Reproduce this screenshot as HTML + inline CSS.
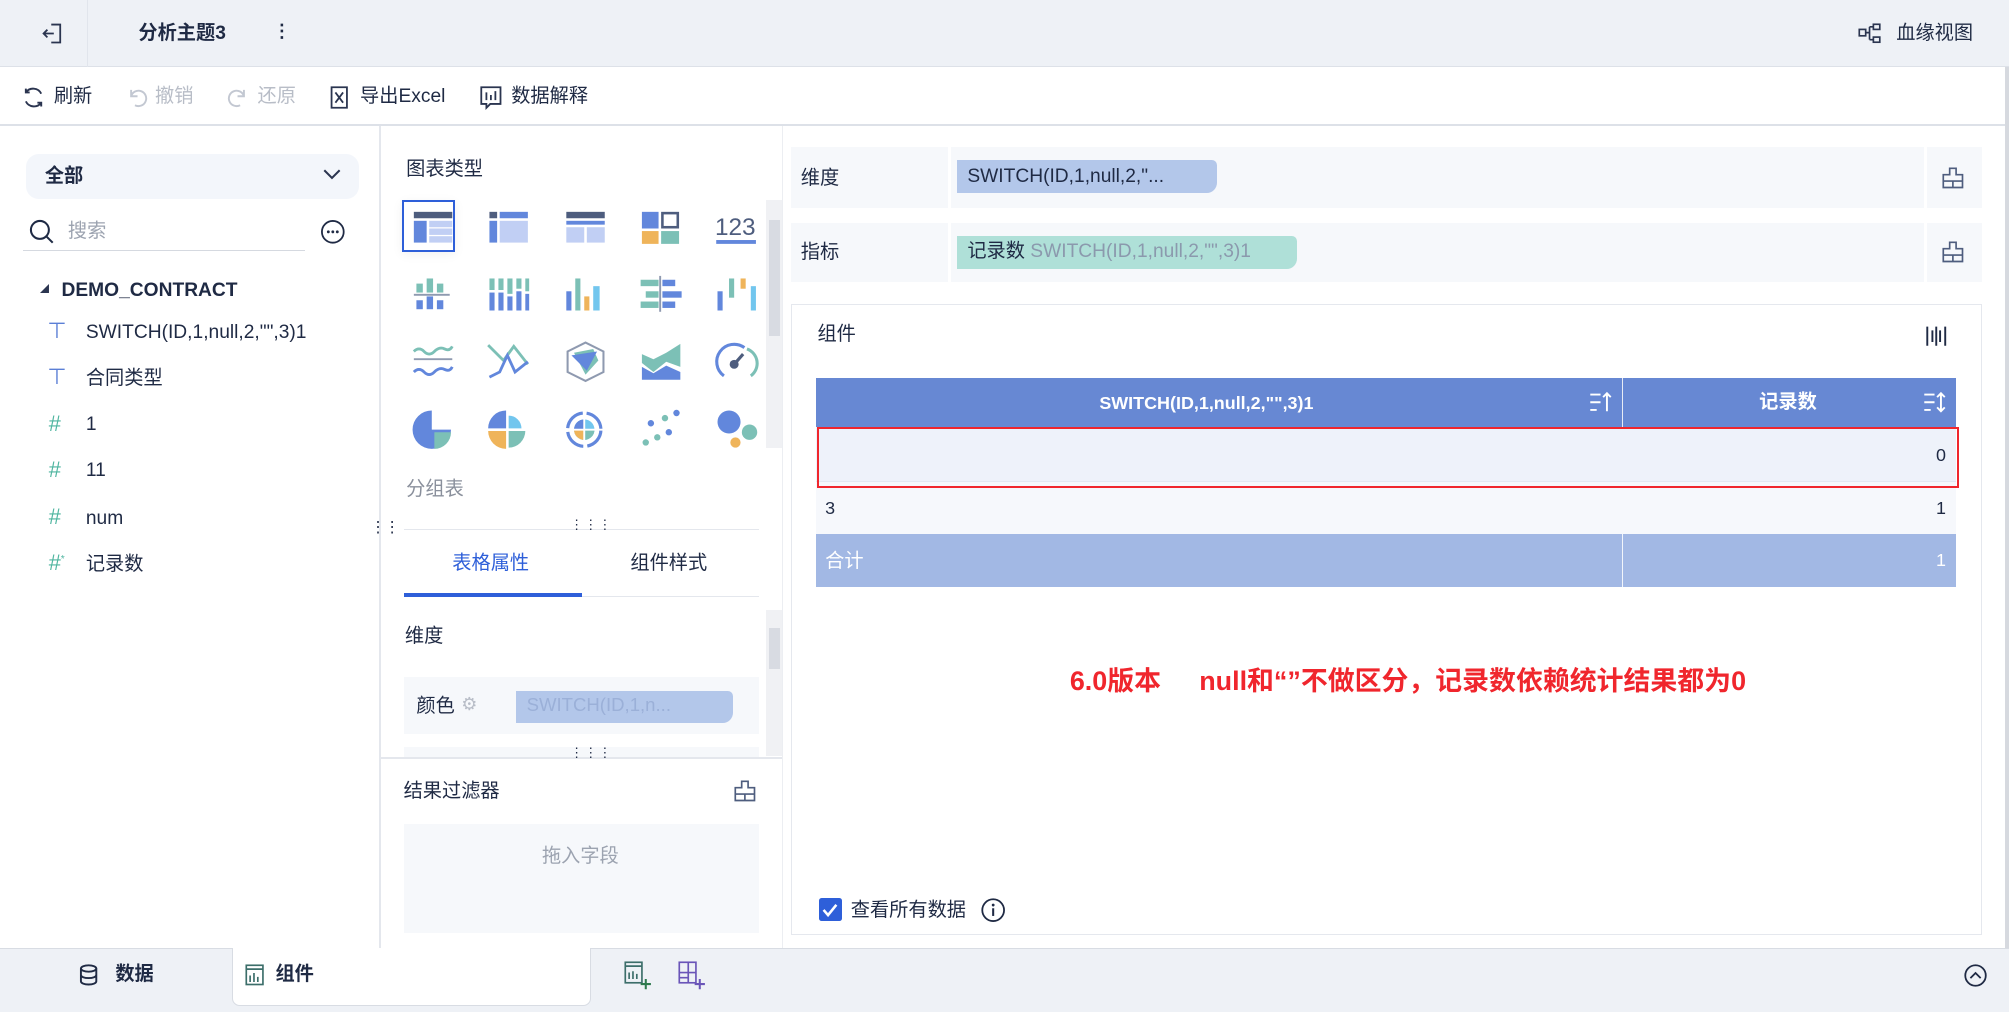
<!DOCTYPE html>
<html><head><meta charset="utf-8"><style>
*{box-sizing:border-box;margin:0;padding:0}
html,body{width:2009px;height:1012px;overflow:hidden;background:#fff}
#r{zoom:1.28125;width:1568px;height:790px;position:relative;font-family:"Liberation Sans","Noto Sans CJK SC",sans-serif;color:#1f2a44;font-size:15px}
.a{position:absolute}
.t{position:absolute;white-space:nowrap;line-height:1}
svg{position:absolute;overflow:visible}
</style></head><body><div id="r">
<div class="a" style="left:0;top:0;width:1568px;height:52px;background:#eef1f6;border-bottom:1px solid #dde1e8"></div>
<div class="a" style="left:68px;top:0;width:1px;height:52px;background:#e1e5ec"></div>
<svg style="left:32px;top:17px" width="18" height="18" viewBox="0 0 18 18" fill="none" stroke="#2b3550" stroke-width="1.4"><path d="M8 2h7v14H8M2 9h8M5 6l-3 3 3 3"/></svg>
<div class="t" style="left:108px;top:19px;font-weight:bold;font-size:15px">分析主题3</div>
<div class="t" style="left:213px;top:18px;font-size:14px;font-weight:bold">⋮</div>
<svg style="left:1450px;top:18px" width="18" height="16" viewBox="0 0 18 16" fill="none" stroke="#2b3550" stroke-width="1.3"><rect x="1" y="5" width="5" height="5"/><rect x="12" y="1" width="5" height="4"/><rect x="12" y="11" width="5" height="4"/><path d="M6 7.5h3M9 3v10M9 3h3M9 13h3"/></svg>
<div class="t" style="left:1480px;top:19px;font-size:15px">血缘视图</div>
<div class="a" style="left:0;top:97px;width:1568px;height:1px;background:#dde1e8"></div>
<svg style="left:17px;top:67px" width="18" height="18" viewBox="0 0 18 18" fill="none" stroke="#2b3550" stroke-width="1.5"><path d="M15 6A7 7 0 0 0 3 5M3 12a7 7 0 0 0 12 1M3 2v3h3M15 16v-3h-3"/></svg>
<div class="t" style="left:42px;top:68px">刷新</div>
<svg style="left:98px;top:67px" width="18" height="18" viewBox="0 0 18 18" fill="none" stroke="#c3c8d2" stroke-width="1.5"><path d="M4 3v5h5M4 8a6 6 0 1 1 3 7"/></svg>
<div class="t" style="left:121px;top:68px;color:#b8bdc7">撤销</div>
<svg style="left:176px;top:67px" width="18" height="18" viewBox="0 0 18 18" fill="none" stroke="#c3c8d2" stroke-width="1.5"><path d="M14 3v5H9M14 8a6 6 0 1 0-3 7"/></svg>
<div class="t" style="left:201px;top:68px;color:#b8bdc7">还原</div>
<svg style="left:257px;top:67px" width="16" height="18" viewBox="0 0 16 18" fill="none" stroke="#2b3550" stroke-width="1.4"><path d="M2 1h12v16H2zM5 5l6 8M11 5l-6 8"/></svg>
<div class="t" style="left:281px;top:68px">导出Excel</div>
<svg style="left:375px;top:67px" width="17" height="18" viewBox="0 0 17 18" fill="none" stroke="#2b3550" stroke-width="1.4"><path d="M1 1h15v13H8l-3 3v-3H1zM5 5v6M8.5 7v4M12 4v7"/></svg>
<div class="t" style="left:399px;top:68px">数据解释</div>
<div class="a" style="left:296px;top:98px;width:1px;height:642px;background:#e4e7ed"></div>
<div class="a" style="left:20px;top:120px;width:260px;height:35px;background:#f3f6fb;border-radius:10px"></div>
<div class="t" style="left:35px;top:130px;font-weight:bold">全部</div>
<svg style="left:252px;top:132px" width="14" height="9" viewBox="0 0 14 9" fill="none" stroke="#2b3550" stroke-width="1.6"><path d="M1 1l6 6 6-6"/></svg>
<svg style="left:23px;top:171px" width="20" height="20" viewBox="0 0 20 20" fill="none" stroke="#1f2a44" stroke-width="1.6"><circle cx="8.5" cy="8.5" r="7"/><path d="M13.5 13.5l5 5"/></svg>
<div class="t" style="left:53px;top:173px;color:#9ca3b0">搜索</div>
<div class="a" style="left:18px;top:195px;width:220px;height:1px;background:#d5d9e0"></div>
<svg style="left:250px;top:171px" width="20" height="20" viewBox="0 0 20 20"><circle cx="10" cy="10" r="8.5" fill="none" stroke="#1f2a44" stroke-width="1.4"/><circle cx="6.5" cy="10" r="1.1" fill="#1f2a44"/><circle cx="10" cy="10" r="1.1" fill="#1f2a44"/><circle cx="13.5" cy="10" r="1.1" fill="#1f2a44"/></svg>
<svg style="left:31px;top:222px" width="8" height="8"><path d="M7 0v7H0z" fill="#2b3550"/></svg>
<div class="t" style="left:48px;top:219px;font-weight:bold;font-size:15px">DEMO_CONTRACT</div>
<div class="t" style="left:37px;top:250px;color:#5b7fd6;font-size:17px">⊤</div>
<div class="t" style="left:67px;top:252px">SWITCH(ID,1,null,2,"",3)1</div>
<div class="t" style="left:37px;top:286px;color:#5b7fd6;font-size:17px">⊤</div>
<div class="t" style="left:67px;top:288px">合同类型</div>
<div class="t" style="left:38px;top:322px;color:#4fb5a0;font-size:17px">#</div><div class="t" style="left:67px;top:324px">1</div>
<div class="t" style="left:38px;top:358px;color:#4fb5a0;font-size:17px">#</div><div class="t" style="left:67px;top:360px">11</div>
<div class="t" style="left:38px;top:395px;color:#4fb5a0;font-size:17px">#</div><div class="t" style="left:67px;top:397px">num</div>
<div class="t" style="left:38px;top:431px;color:#4fb5a0;font-size:17px">#<sup style="font-size:8px">*</sup></div><div class="t" style="left:67px;top:433px">记录数</div>
<div class="t" style="left:289px;top:409px;font-size:12px;line-height:6px;letter-spacing:-1px">⋮⋮</div>
<div class="t" style="left:317px;top:125px">图表类型</div>
<div class="a" style="left:314px;top:156px;width:41px;height:41px;border:2px solid #2e5fd9;box-shadow:0 2px 8px rgba(0,0,0,.06)"></div>
<svg style="left:320px;top:162px" width="280" height="190" viewBox="0 0 280 190">
<g><rect x="3" y="3" width="30" height="5" fill="#4e5d7e"/><rect x="3" y="10" width="10" height="17" fill="#6287dc"/><rect x="15" y="10" width="18" height="5" fill="#c1cff4"/><rect x="15" y="16" width="18" height="5" fill="#c1cff4"/><rect x="15" y="22" width="18" height="5" fill="#c1cff4"/></g>
<g transform="translate(59,0)"><rect x="3" y="3" width="6" height="5" fill="#4e5d7e"/><rect x="11" y="3" width="22" height="5" fill="#6287dc"/><rect x="3" y="10" width="6" height="17" fill="#6287dc"/><rect x="11" y="10" width="22" height="17" fill="#c1cff4"/></g>
<g transform="translate(119,0)"><rect x="3" y="3" width="30" height="5" fill="#4e5d7e"/><rect x="3" y="10" width="30" height="3" fill="#6287dc"/><rect x="3" y="15" width="14" height="12" fill="#c1cff4"/><rect x="19" y="15" width="14" height="12" fill="#c1cff4"/></g>
<g transform="translate(178,0)"><rect x="3" y="3" width="13" height="13" fill="#6287dc"/><rect x="19" y="4" width="12" height="11" fill="none" stroke="#4e5d7e" stroke-width="2"/><rect x="3" y="18" width="13" height="10" fill="#efb45a"/><rect x="18" y="18" width="14" height="10" fill="#7cc0b6"/></g>
<g transform="translate(237,0)"><text x="1" y="21" font-family="Liberation Sans" font-size="19" fill="#4e5d7e">123</text><rect x="2" y="25" width="31" height="3" fill="#6287dc"/></g>
<g transform="translate(0,52)"><rect x="5" y="7" width="5" height="7" fill="#7cc0b6"/><rect x="13" y="3" width="5" height="11" fill="#7cc0b6"/><rect x="21" y="7" width="5" height="7" fill="#7cc0b6"/><rect x="3" y="15" width="28" height="1.5" fill="#8f9ab0"/><rect x="5" y="20" width="5" height="7" fill="#6287dc"/><rect x="13" y="17" width="5" height="10" fill="#6287dc"/><rect x="21" y="20" width="5" height="7" fill="#6287dc"/></g>
<g transform="translate(59,52)" fill="#6287dc"><rect x="3" y="14" width="4" height="14"/><rect x="10" y="14" width="4" height="14"/><rect x="17" y="17" width="4" height="11"/><rect x="24" y="13" width="4" height="15"/><rect x="31" y="15" width="3" height="13"/><g fill="#7cc0b6"><rect x="3" y="3" width="4" height="9"/><rect x="10" y="3" width="4" height="9"/><rect x="17" y="3" width="4" height="12"/><rect x="24" y="3" width="4" height="8"/><rect x="31" y="3" width="3" height="10"/></g></g>
<g transform="translate(119,52)"><rect x="3" y="13" width="4" height="15" fill="#6287dc"/><rect x="10" y="3" width="4" height="25" fill="#7cc0b6"/><rect x="17" y="17" width="4" height="11" fill="#efb45a"/><rect x="24" y="9" width="5" height="19" fill="#72c6ee"/></g>
<g transform="translate(178,52)"><rect x="2" y="4" width="14" height="5" fill="#7cc0b6"/><rect x="6" y="13" width="10" height="5" fill="#7cc0b6"/><rect x="2" y="21" width="14" height="5" fill="#7cc0b6"/><rect x="16.5" y="1" width="1.5" height="28" fill="#8f9ab0"/><rect x="19" y="4" width="10" height="5" fill="#6287dc"/><rect x="19" y="13" width="15" height="5" fill="#6287dc"/><rect x="19" y="21" width="10" height="5" fill="#6287dc"/></g>
<g transform="translate(237,52)"><rect x="3" y="13" width="4" height="15" fill="#6287dc"/><rect x="12" y="3" width="4" height="15" fill="#7cc0b6"/><rect x="21" y="3" width="4" height="8" fill="#efb45a"/><rect x="29" y="9" width="4" height="19" fill="#72c6ee"/></g>
<g transform="translate(0,104)" fill="none" stroke-width="2.2"><path d="M3 8q4-4 8 0t8 0 8-2 6-2" stroke="#7cc0b6"/><path d="M3 14h30" stroke="#8f9ab0" stroke-width="1.5"/><path d="M3 24q4-4 8 0t8 0 8-2 6-2" stroke="#6287dc"/></g>
<g transform="translate(59,104)" fill="none" stroke-width="2.2"><path d="M2 3l12 12 8-11 11 14" stroke="#7cc0b6"/><path d="M3 28l8-4 6-13 6 13 10-8" stroke="#6287dc"/></g>
<g transform="translate(119,104)"><path d="M18 1l14 7v16l-14 7L4 24V8z" fill="none" stroke="#8f9ab0" stroke-width="1.6"/><path d="M9 9l15-3 4 9-10 11z" fill="#7cc0b6"/><path d="M7 11l20-3-8 15z" fill="#6287dc"/></g>
<g transform="translate(178,104)"><path d="M3 10l9 4 10-5 11-7v18L22 16l-10 8L3 17z" fill="#7cc0b6"/><path d="M3 20l9 5 10-6 11 5v6H3z" fill="#6287dc"/></g>
<g transform="translate(237,104)" fill="none" stroke-width="2.4"><path d="M8 27A12 12 0 0 1 24 5" stroke="#6287dc"/><path d="M26 6a12 12 0 0 1 3 21" stroke="#7cc0b6"/><circle cx="16" cy="18" r="3.5" fill="#4e5d7e" stroke="none"/><path d="M16 18l7-8" stroke="#4e5d7e"/></g>
<g transform="translate(0,156)"><path d="M17 2a15 15 0 1 0 15 15H17z" fill="#6287dc"/><path d="M19 19h13a13 13 0 0 1-13 13z" fill="#7cc0b6"/></g>
<g transform="translate(59,156)"><path d="M16 2a14 14 0 0 0-14 14h14z" fill="#6287dc"/><path d="M18 6a10 10 0 0 1 10 10H18z" fill="#72c6ee"/><path d="M2 18a14 14 0 0 0 14 14V18z" fill="#efb45a"/><path d="M18 18h13a13 13 0 0 1-13 13z" fill="#7cc0b6"/></g>
<g transform="translate(119,156)" fill="none" stroke-width="2.5"><circle cx="17" cy="17" r="13" stroke="#6287dc" stroke-dasharray="18 3"/><circle cx="17" cy="17" r="8" fill="#72c6ee" stroke="none"/><path d="M17 17V9a8 8 0 0 0-8 8z" fill="#6287dc" stroke="none"/><path d="M17 17h-8a8 8 0 0 0 8 8z" fill="#efb45a" stroke="none"/><path d="M17 17v8a8 8 0 0 0 8-8z" fill="#7cc0b6" stroke="none"/><path d="M17 2v30M2 17h30" stroke="#fff" stroke-width="1.5"/></g>
<g transform="translate(178,156)"><circle cx="30" cy="4" r="2.5" fill="#6287dc"/><circle cx="21" cy="8" r="2.5" fill="#7cc0b6"/><circle cx="10" cy="12" r="2.5" fill="#6287dc"/><circle cx="24" cy="19" r="2.5" fill="#6287dc"/><circle cx="15" cy="23" r="2.5" fill="#7cc0b6"/><circle cx="6" cy="27" r="2.5" fill="#7cc0b6"/></g>
<g transform="translate(237,156)"><circle cx="12" cy="11" r="9" fill="#6287dc"/><circle cx="28" cy="19" r="6" fill="#7cc0b6"/><circle cx="17" cy="27" r="4" fill="#efb45a"/></g>
</svg>
<div class="a" style="left:598px;top:156px;width:13px;height:194px;background:#f0f1f4"></div>
<div class="a" style="left:600px;top:172px;width:9px;height:90px;background:#d8dbe2"></div>
<div class="t" style="left:317px;top:375px;color:#8a909c">分组表</div>
<div class="a" style="left:315px;top:413px;width:277px;height:1px;background:#e4e7ed"></div>
<div class="t" style="left:445px;top:405px;font-size:10px;letter-spacing:1px">⋮⋮⋮</div>
<div class="t" style="left:353px;top:432px;color:#2e5fd9">表格属性</div>
<div class="t" style="left:492px;top:432px">组件样式</div>
<div class="a" style="left:315px;top:465px;width:277px;height:1px;background:#e4e7ed"></div>
<div class="a" style="left:315px;top:463px;width:139px;height:3px;background:#2e5fd9"></div>
<div class="t" style="left:316px;top:489px">维度</div>
<div class="a" style="left:315px;top:528px;width:277px;height:45px;background:#f6f8fb"></div>
<div class="t" style="left:325px;top:544px">颜色</div>
<div class="t" style="left:360px;top:543px;color:#b8bdc7;font-size:14px">⚙</div>
<div class="a" style="left:403px;top:539px;width:169px;height:25px;background:#b3c7ea;border-radius:0 4px 8px 0"></div>
<div class="t" style="left:411px;top:543px;color:#9bb0d8;font-size:14.5px">SWITCH(ID,1,n...</div>
<div class="a" style="left:315px;top:583px;width:277px;height:8px;background:#f6f8fb"></div>
<div class="a" style="left:598px;top:476px;width:13px;height:114px;background:#f0f1f4"></div>
<div class="a" style="left:600px;top:490px;width:9px;height:32px;background:#d8dbe2"></div>
<div class="a" style="left:296px;top:591px;width:314px;height:1px;background:#e4e7ed"></div>
<div class="t" style="left:445px;top:583px;font-size:10px;letter-spacing:1px">⋮⋮⋮</div>
<div class="t" style="left:315px;top:610px">结果过滤器</div>
<svg style="left:573px;top:609px" width="17" height="17" viewBox="0 0 17 17" fill="none" stroke="#4e5d7e" stroke-width="1.3"><path d="M6 1h5v5h5v10H1V6h5zM1 11h15M8.5 11v5"/></svg>
<div class="a" style="left:315px;top:643px;width:277px;height:85px;background:#f6f8fb"></div>
<div class="t" style="left:423px;top:661px;color:#9ca3b0">拖入字段</div>
<div class="a" style="left:610px;top:98px;width:1px;height:642px;background:#eceef2"></div>
<div class="a" style="left:617px;top:115px;width:930px;height:47px;background:#f6f8fb"></div>
<div class="a" style="left:740px;top:115px;width:2px;height:47px;background:#fff"></div>
<div class="a" style="left:1502px;top:115px;width:2px;height:47px;background:#fff"></div>
<div class="t" style="left:625px;top:132px">维度</div>
<div class="a" style="left:747px;top:125px;width:203px;height:26px;background:#b3c7ea;border-radius:0 4px 8px 0"></div>
<div class="t" style="left:755px;top:130px">SWITCH(ID,1,null,2,"...</div>
<div class="a" style="left:617px;top:174px;width:930px;height:46px;background:#f6f8fb"></div>
<div class="a" style="left:740px;top:174px;width:2px;height:46px;background:#fff"></div>
<div class="a" style="left:1502px;top:174px;width:2px;height:46px;background:#fff"></div>
<div class="t" style="left:625px;top:190px">指标</div>
<div class="a" style="left:747px;top:184px;width:265px;height:26px;background:#afe0d8;border-radius:0 4px 8px 0"></div>
<div class="t" style="left:755px;top:189px">记录数 <span style="color:#8b99ad">SWITCH(ID,1,null,2,"",3)1</span></div>
<svg style="left:1516px;top:130px" width="17" height="17" viewBox="0 0 17 17" fill="none" stroke="#4e5d7e" stroke-width="1.3"><path d="M6 1h5v5h5v10H1V6h5zM1 11h15M8.5 11v5"/></svg>
<svg style="left:1516px;top:188px" width="17" height="17" viewBox="0 0 17 17" fill="none" stroke="#4e5d7e" stroke-width="1.3"><path d="M6 1h5v5h5v10H1V6h5zM1 11h15M8.5 11v5"/></svg>
<div class="a" style="left:617px;top:237px;width:930px;height:493px;border:1px solid #e5e8ee"></div>
<div class="t" style="left:638px;top:254px">组件</div>
<svg style="left:1503px;top:253px" width="16" height="18" viewBox="0 0 16 18" stroke="#1f2a44" stroke-width="1.5"><path d="M1 2v15M5 5v9M8 2v15M11 5v9M15 2v15"/></svg>
<div class="a" style="left:637px;top:295px;width:890px;height:38px;background:#6788d3"></div>
<div class="a" style="left:1266px;top:295px;width:1px;height:163px;background:#e8ecf5"></div>
<div class="t" style="left:858px;top:308px;color:#fff;font-weight:bold;font-size:14px">SWITCH(ID,1,null,2,"",3)1</div>
<div class="t" style="left:1373px;top:307px;color:#fff;font-weight:bold;font-size:15px">记录数</div>
<svg style="left:1240px;top:306px" width="18" height="16" viewBox="0 0 18 16" fill="none" stroke="#fff" stroke-width="1.5"><path d="M1 2h8M1 8h8M1 14h5M14 15V1M11 4l3-3 3 3"/></svg>
<svg style="left:1501px;top:306px" width="18" height="16" viewBox="0 0 18 16" fill="none" stroke="#fff" stroke-width="1.5"><path d="M1 2h8M1 8h8M1 14h5M14 1v14M11 4l3-3 3 3M11 12l3 3 3-3"/></svg>
<div class="a" style="left:637px;top:333px;width:890px;height:43px;background:#eef2fa;border-bottom:1px solid #e3e8f2"></div>
<div class="a" style="left:637px;top:376px;width:890px;height:41px;background:#f6f8fc"></div>
<div class="a" style="left:637px;top:417px;width:890px;height:41px;background:#a2b8e4"></div>
<div class="a" style="left:1266px;top:417px;width:1px;height:41px;background:#f2f5fb"></div>
<div class="a" style="left:638px;top:333px;width:891px;height:48px;border:2px solid #f0262d"></div>
<div class="t" style="left:1511px;top:349px;font-size:14px">0</div>
<div class="t" style="left:644px;top:390px;font-size:14px">3</div>
<div class="t" style="left:1511px;top:390px;font-size:14px">1</div>
<div class="t" style="left:644px;top:431px;color:#fff">合计</div>
<div class="t" style="left:1511px;top:431px;color:#fff;font-size:14px">1</div>
<div class="t" style="left:835px;top:521px;color:#f0262d;font-weight:bold;font-size:21px">6.0版本</div>
<div class="t" style="left:936px;top:521px;color:#f0262d;font-weight:bold;font-size:21px">null和“”不做区分，记录数依赖统计结果都为0</div>
<div class="a" style="left:639px;top:701px;width:18px;height:18px;background:#2e5fd9;border-radius:2px"></div>
<svg style="left:641px;top:703px" width="14" height="14" viewBox="0 0 14 14" fill="none" stroke="#fff" stroke-width="2"><path d="M2 7l3.5 4L12 3"/></svg>
<div class="t" style="left:664px;top:703px">查看所有数据</div>
<svg style="left:766px;top:701px" width="19" height="19" viewBox="0 0 19 19"><circle cx="9.5" cy="9.5" r="8.5" fill="none" stroke="#1f2a44" stroke-width="1.4"/><circle cx="9.5" cy="5.5" r="1.1" fill="#1f2a44"/><path d="M9.5 8v6" stroke="#1f2a44" stroke-width="1.6"/></svg>
<div class="a" style="left:1565px;top:52px;width:3px;height:688px;background:#d6d9df"></div>
<div class="a" style="left:0;top:740px;width:1568px;height:50px;background:#eef1f6;border-top:1px solid #d8dce3"></div>
<svg style="left:62px;top:752px" width="15" height="17" viewBox="0 0 15 17" fill="none" stroke="#1f2a44" stroke-width="1.5"><ellipse cx="7.5" cy="3.5" rx="6" ry="2.5"/><path d="M1.5 3.5v10c0 1.5 2.7 2.5 6 2.5s6-1 6-2.5v-10M1.5 8.5c0 1.5 2.7 2.5 6 2.5s6-1 6-2.5"/></svg>
<div class="t" style="left:90px;top:753px;font-weight:bold">数据</div>
<div class="a" style="left:181px;top:740px;width:280px;height:45px;background:#fff;border:1px solid #d8dce3;border-top:none;border-radius:0 0 6px 6px"></div>
<svg style="left:191px;top:752px" width="15" height="17" viewBox="0 0 15 17" fill="none" stroke="#3c6e6a" stroke-width="1.3"><rect x="1" y="1" width="13" height="15"/><path d="M1 4h13M4 14V9M7 14V7M10 14v-4"/></svg>
<div class="t" style="left:215px;top:753px;font-weight:bold">组件</div>
<svg style="left:487px;top:750px" width="22" height="22" viewBox="0 0 22 22" fill="none" stroke="#3c6e6a" stroke-width="1.3"><rect x="1" y="1" width="13" height="16"/><path d="M1 4h13M4 14V9M7 14V8M10 14v-4"/><path d="M17 14v8M13 18h8" stroke="#2e7a4e" stroke-width="1.6"/></svg>
<svg style="left:529px;top:750px" width="22" height="22" viewBox="0 0 22 22" fill="none" stroke="#6a55b8" stroke-width="1.3"><rect x="1" y="1" width="13" height="16"/><path d="M8 1v16M1 9h13M1 13h7"/><path d="M17 14v8M13 18h8" stroke-width="1.6"/></svg>
<svg style="left:1533px;top:752px" width="18" height="18" viewBox="0 0 18 18" fill="none" stroke="#1f2a44" stroke-width="1.4"><circle cx="9" cy="9" r="8"/><path d="M5 11l4-4 4 4"/></svg>
</div></body></html>
